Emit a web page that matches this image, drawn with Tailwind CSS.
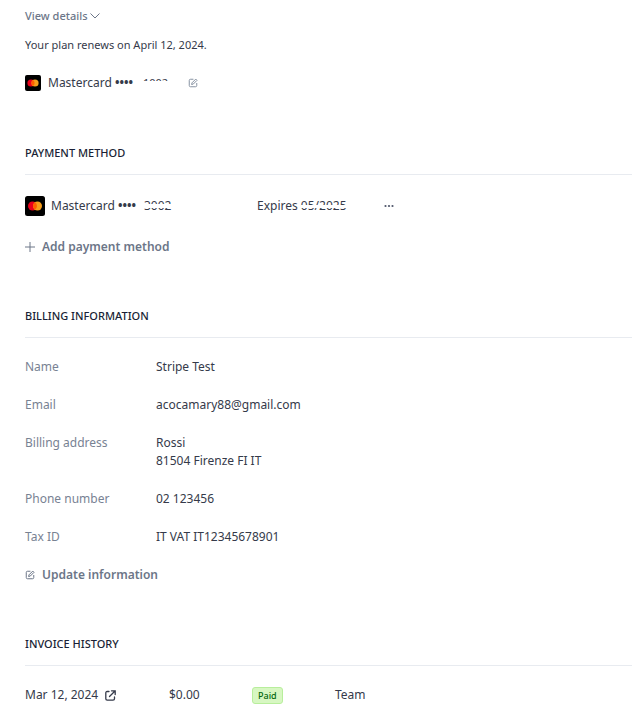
<!DOCTYPE html>
<html lang="en">
<head>
<meta charset="utf-8">
<title>Billing</title>
<script src="https://cdn.jsdelivr.net/npm/@tailwindcss/browser@4"></script>
</head>
<body class="bg-white font-['Noto_Sans',sans-serif] text-xs leading-[18px] text-[#353a4a]">
<svg class="hidden">
  <symbol id="card" viewBox="0 0 20 20">
    <rect width="20" height="20" rx="2.5" fill="#000"/>
    <circle cx="7.5" cy="10" r="4.5" fill="#eb001b"/>
    <circle cx="12.5" cy="10" r="4.5" fill="#f79e1b"/>
    <path d="M10 6.26a4.5 4.5 0 0 1 0 7.48a4.5 4.5 0 0 1 0-7.48z" fill="#ff5f00"/>
  </symbol>
  <symbol id="edit" viewBox="0 0 12 12">
    <path d="M6.5 1.500H3Q1.500 1.500 1.500 3V9Q1.500 10.500 3 10.500H9Q10.500 10.500 10.500 9V6" fill="none" stroke="currentColor" stroke-width="1.200"/>
    <path d="M4.300 7.800L4.800 5.800L9.300 1.300L10.800 2.800L6.300 7.300Z" fill="none" stroke="currentColor" stroke-width="1.200" stroke-linejoin="round"/>
  </symbol>
</svg>
<main class="pt-[7px] pl-[25px]">
  <section>
    <button class="flex items-center gap-[2px] text-[11px] leading-[18px] font-medium text-[#6c7688]">View details
      <svg class="size-[10px]" viewBox="0 0 10 10" fill="none" stroke="currentColor" stroke-width="1"><path d="M.5 2.500L5 7L9.500 2.500"/></svg>
    </button>
    <p class="mt-[11px] text-[11px] leading-[18px]">Your plan renews on April 12, 2024.</p>
    <div class="mt-5 flex items-center">
      <svg class="mr-[7px] size-4"><use href="#card"/></svg>
      <span>Mastercard <b>••••</b></span>
      <span class="relative ml-[10px] text-[11px] leading-[18px]">1002<span class="absolute inset-x-0 top-[7px] bottom-0 bg-white"></span></span>
      <button class="ml-5 text-[#8792a2]" aria-label="Edit card"><svg class="size-[10px]"><use href="#edit"/></svg></button>
    </div>
  </section>

  <section class="mt-[52px]">
    <h2 class="border-b border-[#e8ebf0] pb-3 text-[11px] leading-[18px] font-medium text-[#1a1f36]">PAYMENT METHOD</h2>
    <div class="mt-[21px] flex items-center">
      <div class="flex w-[232px] items-center">
        <svg class="mr-[6px] size-5"><use href="#card"/></svg>
        <span>Mastercard <b>••••</b></span>
        <span class="relative ml-2">3002<span class="absolute inset-x-0 top-[7px] h-1 bg-white"></span></span>
      </div>
      <div class="w-[127px]">Expires <span class="relative inline-block">05/2025<span class="absolute inset-x-0 top-2 h-[3px] bg-white"></span></span></div>
      <button class="text-[#4f566b]" aria-label="More options"><svg class="h-3 w-[10px]" viewBox="0 0 10 12" fill="currentColor"><circle cx="1.500" cy="6" r="1.100"/><circle cx="5" cy="6" r="1.100"/><circle cx="8.500" cy="6" r="1.100"/></svg></button>
    </div>
    <button class="mt-[22px] flex items-center gap-[7px] font-semibold text-[#6c7688]">
      <svg class="size-[10px]" viewBox="0 0 10 10" stroke="currentColor" stroke-width="1"><path d="M5 0V10M0 5H10"/></svg>Add payment method
    </button>
  </section>

  <section class="mt-[51px]">
    <h2 class="border-b border-[#e8ebf0] pb-3 text-[11px] leading-[18px] font-medium text-[#1a1f36]">BILLING INFORMATION</h2>
    <dl class="mt-5 grid grid-cols-[131px_1fr] gap-y-5">
      <dt class="text-[#788293]">Name</dt><dd>Stripe Test</dd>
      <dt class="text-[#788293]">Email</dt><dd>acocamary88@gmail.com</dd>
      <dt class="text-[#788293]">Billing address</dt><dd>Rossi<br>81504 Firenze FI IT</dd>
      <dt class="text-[#788293]">Phone number</dt><dd>02 123456</dd>
      <dt class="text-[#788293]">Tax ID</dt><dd>IT VAT IT12345678901</dd>
    </dl>
    <button class="mt-5 flex items-center gap-[7px] font-semibold text-[#6c7688]">
      <svg class="size-[10px]"><use href="#edit"/></svg>Update information
    </button>
  </section>

  <section class="mt-[51px]">
    <h2 class="border-b border-[#e8ebf0] pb-3 text-[11px] leading-[18px] font-medium text-[#1a1f36]">INVOICE HISTORY</h2>
    <table class="mt-5 w-full table-fixed border-collapse text-left">
      <tbody><tr>
        <td class="w-36 p-0"><a href="#" class="flex items-center gap-[7px]">Mar 12, 2024
          <svg class="size-[11px]" viewBox="0 0 11 11" fill="none" stroke="currentColor" stroke-width="1.300" stroke-linecap="round"><path d="M4 1.500H2.200Q.8 1.500 .8 3V8.800Q.8 10.200 2.200 10.200H8Q9.500 10.200 9.500 8.800V7M6.500 .8H10.200V4.500M10 1L4.500 6.500"/></svg></a></td>
        <td class="w-[83px] p-0">$0.00</td>
        <td class="w-[83px] p-0"><span class="flex h-[17px] w-fit items-center rounded-[3px] border border-[#b8ee9c] bg-[#d7f7c2] px-[5px] text-[9px] leading-[15px] font-medium text-[#05690d]">Paid</span></td>
        <td class="p-0">Team</td>
      </tr></tbody>
    </table>
  </section>
</main>
</body>
</html>
